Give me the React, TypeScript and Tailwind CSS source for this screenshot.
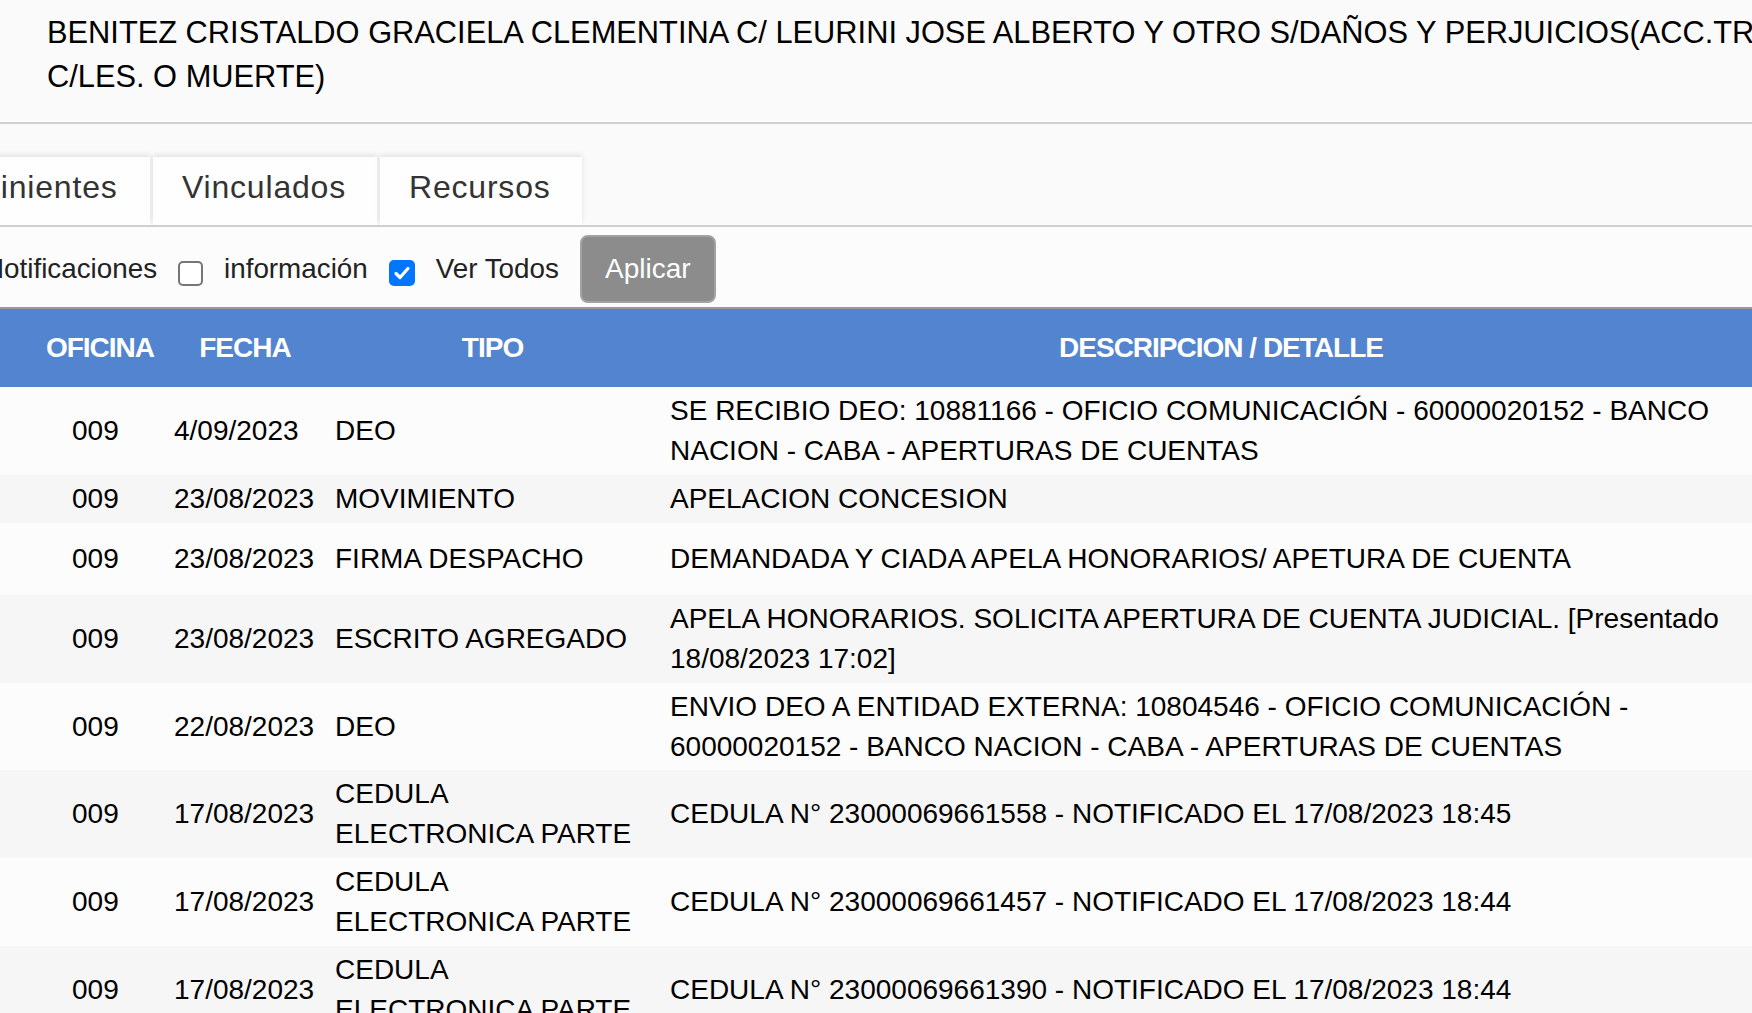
import React from "react";

type Row = {
  tipo: string[];
  fecha: string;
  desc: string[];
  h: string;
  bg: string;
};

const rows: Row[] = [
  {
    fecha: "4/09/2023",
    tipo: ["DEO"],
    desc: [
      "SE RECIBIO DEO: 10881166 - OFICIO COMUNICACIÓN - 60000020152 - BANCO",
      "NACION - CABA - APERTURAS DE CUENTAS",
    ],
    h: "h-[88px]",
    bg: "bg-[#fcfcfc]",
  },
  {
    fecha: "23/08/2023",
    tipo: ["MOVIMIENTO"],
    desc: ["APELACION CONCESION"],
    h: "h-[48px]",
    bg: "bg-[#f6f6f6]",
  },
  {
    fecha: "23/08/2023",
    tipo: ["FIRMA DESPACHO"],
    desc: ["DEMANDADA Y CIADA APELA HONORARIOS/ APETURA DE CUENTA"],
    h: "h-[72px]",
    bg: "bg-[#fcfcfc]",
  },
  {
    fecha: "23/08/2023",
    tipo: ["ESCRITO AGREGADO"],
    desc: [
      "APELA HONORARIOS. SOLICITA APERTURA DE CUENTA JUDICIAL. [Presentado",
      "18/08/2023 17:02]",
    ],
    h: "h-[88px]",
    bg: "bg-[#f6f6f6]",
  },
  {
    fecha: "22/08/2023",
    tipo: ["DEO"],
    desc: [
      "ENVIO DEO A ENTIDAD EXTERNA: 10804546 - OFICIO COMUNICACIÓN -",
      "60000020152 - BANCO NACION - CABA - APERTURAS DE CUENTAS",
    ],
    h: "h-[87px]",
    bg: "bg-[#fcfcfc]",
  },
  {
    fecha: "17/08/2023",
    tipo: ["CEDULA", "ELECTRONICA PARTE"],
    desc: ["CEDULA N° 23000069661558 - NOTIFICADO EL 17/08/2023 18:45"],
    h: "h-[88px]",
    bg: "bg-[#f6f6f6]",
  },
  {
    fecha: "17/08/2023",
    tipo: ["CEDULA", "ELECTRONICA PARTE"],
    desc: ["CEDULA N° 23000069661457 - NOTIFICADO EL 17/08/2023 18:44"],
    h: "h-[88px]",
    bg: "bg-[#fcfcfc]",
  },
  {
    fecha: "17/08/2023",
    tipo: ["CEDULA", "ELECTRONICA PARTE"],
    desc: ["CEDULA N° 23000069661390 - NOTIFICADO EL 17/08/2023 18:44"],
    h: "h-[88px]",
    bg: "bg-[#f6f6f6]",
  },
];

function Lines({ lines }: { lines: string[] }) {
  return (
    <div className="flex flex-col">
      {lines.map((l, i) => (
        <span key={i} className="whitespace-nowrap">
          {l}
        </span>
      ))}
    </div>
  );
}

export default function App() {
  return (
    <div className="w-[1752px] h-[1013px] overflow-hidden bg-[#fafafa] font-['Liberation_Sans',Arial,sans-serif] text-black">
      {/* Title */}
      <div className="h-[122px] pl-[47px] pt-[11px] text-[30.8px] leading-[44px] text-black">
        <div className="whitespace-nowrap">
          BENITEZ CRISTALDO GRACIELA CLEMENTINA C/ LEURINI JOSE ALBERTO Y OTRO S/DAÑOS Y PERJUICIOS(ACC.TRAN.
        </div>
        <div className="whitespace-nowrap">C/LES. O MUERTE)</div>
      </div>
      <div className="h-[2px] bg-[#cfcfcf]" />

      {/* Tabs */}
      <div className="h-[101px] flex items-end gap-[3px] overflow-hidden bg-[#fafafa]">
        <div className="ml-[-114px] w-[264px] h-[68px] pl-[30px] pt-[14px] bg-[#fefefe] shadow-[0_-2px_5px_rgba(0,0,0,0.10)] text-[32px] leading-[32px] tracking-[0.8px] text-[#333] whitespace-nowrap">
          Intervinientes
        </div>
        <div className="w-[224px] h-[68px] pl-[29px] pt-[14px] bg-[#fefefe] shadow-[0_-2px_5px_rgba(0,0,0,0.10)] text-[32px] leading-[32px] tracking-[0.8px] text-[#333] whitespace-nowrap">
          Vinculados
        </div>
        <div className="w-[202px] h-[68px] pl-[29px] pt-[14px] bg-[#fefefe] shadow-[0_-2px_5px_rgba(0,0,0,0.10)] text-[32px] leading-[32px] tracking-[0.8px] text-[#333] whitespace-nowrap">
          Recursos
        </div>
      </div>
      <div className="h-[2px] bg-[#cfcfcf]" />

      {/* Filters */}
      <div className="h-[80px] flex items-center gap-[21px] bg-[#fcfcfc] text-[27.8px] leading-[40px] text-[#222]">
        <span className="ml-[-16px] mt-[4px] whitespace-nowrap">Notificaciones</span>
        <span className="mt-[12px] w-[25px] h-[25px] rounded-[5px] border-2 border-[#767676] bg-white shrink-0" />
        <span className="mt-[4px] whitespace-nowrap">información</span>
        <span className="mt-[12px] w-[26px] h-[26px] rounded-[5px] bg-[#0075ff] shrink-0 flex items-center justify-center">
          <svg width="18" height="18" viewBox="0 0 18 18">
            <path d="M3 9.5 L7 13.5 L15 4.5" fill="none" stroke="white" strokeWidth="3.2" strokeLinecap="round" strokeLinejoin="round" />
          </svg>
        </span>
        <span className="mt-[4px] whitespace-nowrap">Ver Todos</span>
        <button className="mt-[3px] w-[136px] h-[68px] rounded-[8px] border-2 border-[#a2a2a2] bg-[#8c8c8c] text-white text-[28px] leading-[40px] flex items-center justify-center shrink-0">
          Aplicar
        </button>
      </div>
      <div className="h-[2px] bg-[#9a9a9a]" />

      {/* Table header */}
      <div className="w-[1782px] h-[78px] grid grid-cols-[165px_160px_335px_1122px] items-center bg-[#5284cf] text-white font-bold text-[28px] tracking-[-1px]">
        <div className="pl-[35px] text-center whitespace-nowrap">OFICINA</div>
        <div className="text-center whitespace-nowrap">FECHA</div>
        <div className="text-center whitespace-nowrap">TIPO</div>
        <div className="text-center whitespace-nowrap">DESCRIPCION / DETALLE</div>
      </div>

      {/* Table body */}
      <div className="w-[1782px] flex flex-col text-[28px] leading-[40px] text-black">
        {rows.map((r, i) => (
          <div
            key={i}
            className={`${r.h} ${r.bg} grid grid-cols-[165px_160px_335px_1122px] items-center shrink-0`}
          >
            <div className="pl-[72px]">009</div>
            <div className="pl-[9px] whitespace-nowrap">{r.fecha}</div>
            <div className="pl-[10px]">
              <Lines lines={r.tipo} />
            </div>
            <div className="pl-[10px]">
              <Lines lines={r.desc} />
            </div>
          </div>
        ))}
      </div>
    </div>
  );
}
